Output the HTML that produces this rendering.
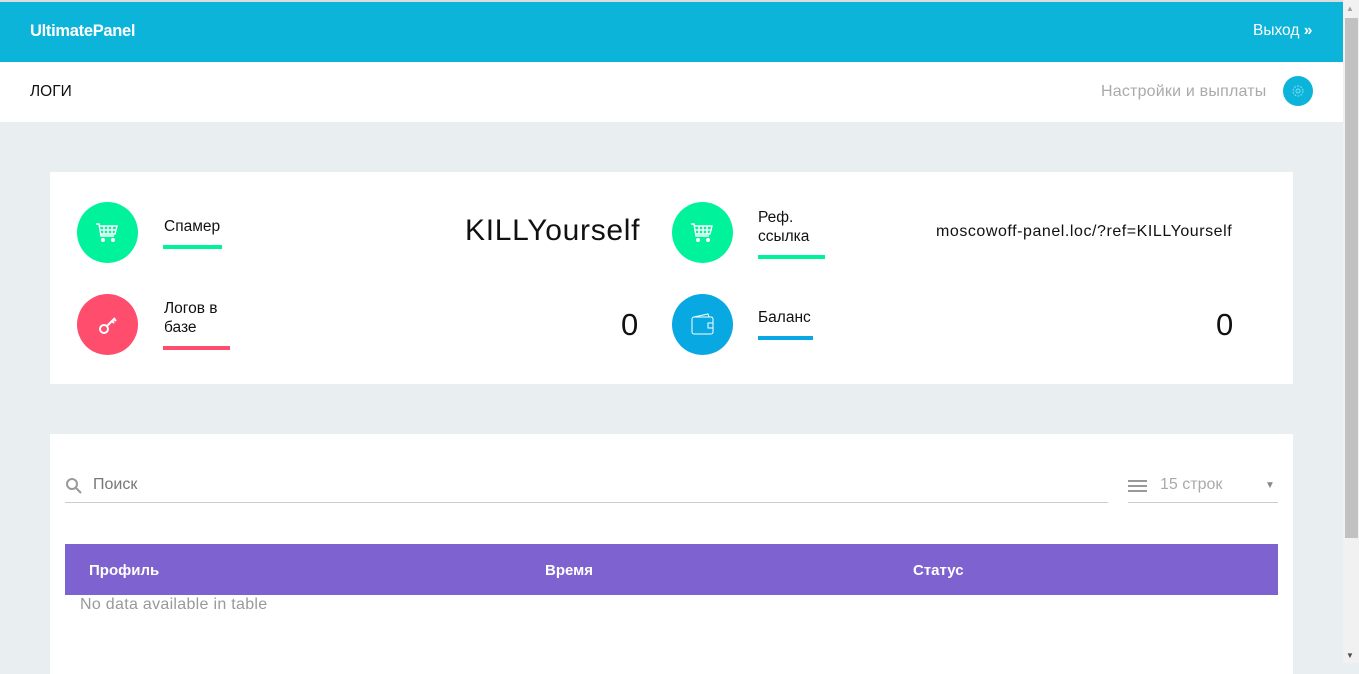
<!DOCTYPE html>
<html><head><meta charset="utf-8"><style>
*{margin:0;padding:0;box-sizing:border-box}
body{width:1359px;height:663px;overflow:hidden;background:#e9eef1;font-family:"Liberation Sans",sans-serif;position:relative}
.a{position:absolute}
.top{left:0;top:0;width:1343px;height:62px;background:#0cb4d9;border-top:2px solid #dcdcdc}
.sub{left:0;top:62px;width:1343px;height:60px;background:#fff}
.card{background:#fff;left:50px;width:1243px}
.c{width:61px;height:61px;border-radius:50%}
.lbl{font-size:15.5px;color:#111;line-height:19px}
.bar{height:4px}
.sb{left:1343px;top:0;width:16px;height:663px;background:#f1f1f1}
</style></head><body>
<div class="a top"></div>
<div class="a" style="left:30px;top:22px;color:#fff;font-size:16.5px;font-weight:bold;letter-spacing:-0.3px">UltimatePanel</div>
<div class="a" style="left:1253px;top:22px;color:#fff;font-size:15.5px">Выход <b>»</b></div>
<div class="a sub"></div>
<div class="a" style="left:30px;top:83px;font-size:15.5px;color:#111">ЛОГИ</div>
<div class="a" style="left:1101px;top:83px;font-size:16px;color:#aaa;letter-spacing:0.2px">Настройки и выплаты</div>
<div class="a c" style="left:1283px;top:76px;width:30px;height:30px;background:#0cb4d9"></div>
<svg class="a" style="left:1290px;top:83px" width="16" height="16" viewBox="0 0 16 16"><circle cx="8" cy="8" r="5" fill="none" stroke="#7ee0f5" stroke-width="1" stroke-dasharray="2 1.2"/><circle cx="8" cy="8" r="2" fill="none" stroke="#7ee0f5"/></svg>

<div class="a card" style="top:172px;height:212px"></div>
<div class="a c" style="left:77px;top:202px;background:#00f39a"></div>
<div class="a c" style="left:77px;top:294px;background:#ff4d6d"></div>
<div class="a c" style="left:672px;top:202px;background:#00f39a"></div>
<div class="a c" style="left:672px;top:294px;background:#08a8e2"></div>
<svg class="a" style="left:95px;top:220px" width="24" height="24" viewBox="0 0 24 24" fill="none" stroke="#fff" stroke-width="1.4"><path d="M1 4h3l2 12h13M5 6h17l-2 8H6M9 6v8M13 6v8M17 6v8M5 10h16"/><circle cx="8" cy="20" r="1.3" fill="#fff"/><circle cx="18" cy="20" r="1.3" fill="#fff"/></svg>
<svg class="a" style="left:690px;top:220px" width="24" height="24" viewBox="0 0 24 24" fill="none" stroke="#fff" stroke-width="1.4"><path d="M1 4h3l2 12h13M5 6h17l-2 8H6M9 6v8M13 6v8M17 6v8M5 10h16"/><circle cx="8" cy="20" r="1.3" fill="#fff"/><circle cx="18" cy="20" r="1.3" fill="#fff"/></svg>
<svg class="a" style="left:96px;top:313px" width="24" height="24" viewBox="0 0 24 24" fill="none" stroke="#fff" stroke-width="2"><circle cx="8" cy="16" r="4"/><path d="M11 13l8-8M16 8l2 2M18 6l2 2"/></svg>
<svg class="a" style="left:690px;top:312px" width="26" height="24" viewBox="0 0 26 24" fill="none" stroke="#fff" stroke-width="1"><rect x="2" y="5" width="21" height="17" rx="2"/><path d="M4 5l14-3 1 3M18 11h5v5h-5z"/></svg>
<div class="a lbl" style="left:164px;top:217px">Спамер</div>
<div class="a bar" style="left:163px;top:245px;width:59px;background:#00f39a"></div>
<div class="a lbl" style="left:164px;top:299px">Логов в<br>базе</div>
<div class="a bar" style="left:163px;top:346px;width:67px;background:#ff4d6d"></div>
<div class="a lbl" style="left:758px;top:208px">Реф.<br>ссылка</div>
<div class="a bar" style="left:758px;top:255px;width:67px;background:#00f39a"></div>
<div class="a lbl" style="left:758px;top:308px">Баланс</div>
<div class="a bar" style="left:758px;top:336px;width:55px;background:#08a8e2"></div>
<div class="a" style="left:465px;top:214px;font-size:30px;color:#111;letter-spacing:0.7px">KILLYourself</div>
<div class="a" style="left:621px;top:307px;font-size:31px;color:#111">0</div>
<div class="a" style="left:936px;top:223px;font-size:16px;color:#111;letter-spacing:0.55px">moscowoff-panel.loc/?ref=KILLYourself</div>
<div class="a" style="left:1216px;top:307px;font-size:31px;color:#111">0</div>

<div class="a card" style="top:434px;height:240px"></div>
<svg class="a" style="left:65px;top:477px" width="18" height="18" viewBox="0 0 18 18" fill="none" stroke="#999" stroke-width="2"><circle cx="7" cy="7" r="5"/><path d="M11 11l5 5"/></svg>
<div class="a" style="left:93px;top:476px;font-size:16px;color:#777">Поиск</div>
<div class="a" style="left:65px;top:502px;width:1043px;height:1px;background:#ccc"></div>
<div class="a" style="left:1128px;top:480px;width:19px;height:2px;background:#999;box-shadow:0 5px 0 #999,0 10px 0 #999"></div>
<div class="a" style="left:1160px;top:476px;font-size:16px;color:#aaa">15 строк</div>
<div class="a" style="left:1265px;top:480px;font-size:10px;color:#888">▼</div>
<div class="a" style="left:1128px;top:502px;width:150px;height:1px;background:#ccc"></div>
<div class="a" style="left:65px;top:544px;width:1213px;height:51px;background:#7e63d0"></div>
<div class="a" style="left:89px;top:562px;font-size:15px;color:#fff;font-weight:bold">Профиль</div>
<div class="a" style="left:545px;top:562px;font-size:15px;color:#fff;font-weight:bold">Время</div>
<div class="a" style="left:913px;top:562px;font-size:15px;color:#fff;font-weight:bold">Статус</div>
<div class="a" style="left:80px;top:596px;font-size:16px;color:#999;letter-spacing:0.3px">No data available in table</div>

<div class="a sb"></div>
<div class="a" style="left:1345px;top:18px;width:13px;height:520px;background:#c1c1c1"></div>
<div class="a" style="left:1346px;top:4px;font-size:8px;color:#a3a3a3">▲</div>
<div class="a" style="left:1346px;top:651px;font-size:8px;color:#505050">▼</div>
</body></html>
